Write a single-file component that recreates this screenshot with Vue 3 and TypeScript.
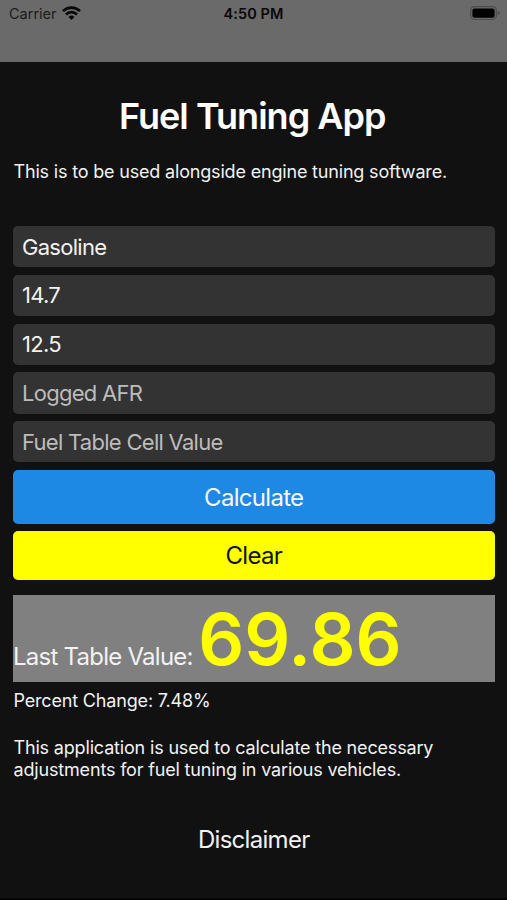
<script setup lang="ts">
import { ref } from 'vue'

interface Field {
  label: string
  value: string
}

const fields = ref<Field[]>([
  { label: 'Fuel Type', value: 'Gasoline' },
  { label: 'Stoichiometric', value: '14.7' },
  { label: 'Target AFR', value: '12.5' },
  { label: 'Logged AFR', value: '' },
  { label: 'Fuel Table Cell Value', value: '' },
])
const tableValue = ref<string>('69.86')
const percentChange = ref<string>('7.48%')

function calculate(): void {
  const [, , target, logged, cell] = fields.value.map((f) => parseFloat(f.value))
  if (!target || !logged || !cell) return
  const ratio = logged / target
  tableValue.value = (cell * ratio).toFixed(2)
  percentChange.value = `${((ratio - 1) * 100).toFixed(2)}%`
}

function clearFields(): void {
  fields.value.slice(3).forEach((f) => (f.value = ''))
}
</script>

<template>
  <div class="screen">
    <header class="status">
      <div class="carrier">
        <span>Carrier</span>
        <svg class="wifi" width="19" height="14" viewBox="0 0 19 14">
          <g fill="none" stroke="#080808" stroke-width="2.7">
            <path d="M1 5.1A12.2 12.2 0 0 1 18 5.1" />
            <path d="M4 8.5A7.7 7.7 0 0 1 15 8.5" />
          </g>
          <path d="M6.5 10.9A4.3 4.3 0 0 1 12.5 10.9L9.5 13.9Z" fill="#080808" />
        </svg>
      </div>
      <span class="time">4:50 PM</span>
      <svg class="battery" width="30" height="15" viewBox="0 0 30 15">
        <rect x="0.7" y="0.7" width="25.6" height="12.8" rx="3.6" fill="none" stroke="#4c4c4c" stroke-width="1.2" />
        <rect x="2.4" y="2.4" width="22.2" height="9.4" rx="2" fill="#000" />
        <path d="M27.7 4.7Q29.8 5.6 29.8 7.1T27.7 9.5Z" fill="#4c4c4c" />
      </svg>
    </header>

    <main class="content">
      <h1>Fuel Tuning App</h1>
      <p class="intro">This is to be used alongside engine tuning software.</p>

      <form class="form" @submit.prevent="calculate">
        <input v-for="field in fields" :key="field.label" v-model="field.value" class="field" type="text" :placeholder="field.label" />
        <button class="btn calculate" type="submit">Calculate</button>
        <button class="btn clear" type="button" @click="clearFields">Clear</button>
      </form>

      <div class="result">
        <span class="result-label">Last Table Value:</span>
        <span class="result-value">{{ tableValue }}</span>
      </div>
      <p class="percent">Percent Change: {{ percentChange }}</p>
      <p class="about">
        This application is used to calculate the necessary<br />
        adjustments for fuel tuning in various vehicles.
      </p>
      <button class="disclaimer" type="button">Disclaimer</button>
    </main>
  </div>
</template>

<style>
body {
  margin: 0;
  background: #111;
}
</style>

<style scoped>
.screen {
  box-sizing: border-box;
  width: 507px;
  height: 900px;
  overflow: hidden;
  background: #111;
  border-bottom: 2px solid #060406;
  color: #f2f2f2;
  font-family: Inter, 'Liberation Sans', sans-serif;
}
.status {
  box-sizing: border-box;
  height: 62px;
  padding: 4px 7px 0 9px;
  display: grid;
  grid-template-columns: 1fr auto 1fr;
  align-items: start;
  background: #6a6a6a;
  color: #080808;
  font-size: 14.5px;
  line-height: 20px;
}
.carrier {
  display: flex;
  align-items: center;
  gap: 5px;
  color: #1c1c1c;
}
.wifi {
  margin-top: -3px;
}
.time {
  padding-right: 2px;
  font-weight: 600;
  letter-spacing: 0.1px;
}
.battery {
  justify-self: end;
  margin-top: 2px;
}
.content {
  padding: 30px 12.5px 0 13px;
}
h1,
p {
  margin: 0;
}
h1 {
  padding-right: 3px;
  font-size: 36px;
  font-weight: 600;
  line-height: 48px;
  letter-spacing: -0.97px;
  text-align: center;
  color: #fff;
}
.intro {
  margin-top: 20px;
  padding-left: 0.5px;
  font-size: 18px;
  line-height: 23px;
  letter-spacing: -0.18px;
  white-space: nowrap;
}
.form {
  margin-top: 43px;
  display: flex;
  flex-direction: column;
  gap: 7.6px;
}
.field {
  box-sizing: border-box;
  width: 100%;
  height: 41.2px;
  padding: 0 9px;
  border: 0;
  border-radius: 5px;
  outline: 0;
  background: #333;
  color: #f2f2f2;
  font: 22px Inter, 'Liberation Sans', sans-serif;
  letter-spacing: -0.72px;
}
.field::placeholder {
  color: #bcbcbc;
  opacity: 1;
}
.btn {
  height: 49px;
  padding: 0;
  border: 0;
  border-radius: 5px;
  font: 24px Inter, 'Liberation Sans', sans-serif;
  letter-spacing: -0.7px;
}
.calculate {
  height: 53.6px;
  padding-top: 1px;
  background: #1e88e5;
  color: #f6faff;
}
.clear {
  background: #ff0;
  color: #111;
}
.result {
  box-sizing: border-box;
  margin-top: 15px;
  height: 87px;
  display: flex;
  align-items: baseline;
  gap: 5.5px;
  background: #808080;
  white-space: nowrap;
}
.result-label {
  font-size: 24px;
  letter-spacing: -0.75px;
}
.result-value {
  font-size: 72px;
  font-weight: 600;
  line-height: 88px;
  letter-spacing: 0;
  color: #ff0;
}
.percent {
  margin-top: 8px;
  padding-left: 0.5px;
  font-size: 18px;
  line-height: 22px;
  letter-spacing: -0.17px;
}
.about {
  margin-top: 25px;
  padding-left: 0.5px;
  font-size: 18px;
  line-height: 22px;
  letter-spacing: -0.17px;
  white-space: nowrap;
}
.disclaimer {
  display: block;
  margin: 44px auto 0;
  padding: 0;
  border: 0;
  background: none;
  color: #f2f2f2;
  font: 24px/30px Inter, 'Liberation Sans', sans-serif;
  letter-spacing: -0.7px;
}
</style>
